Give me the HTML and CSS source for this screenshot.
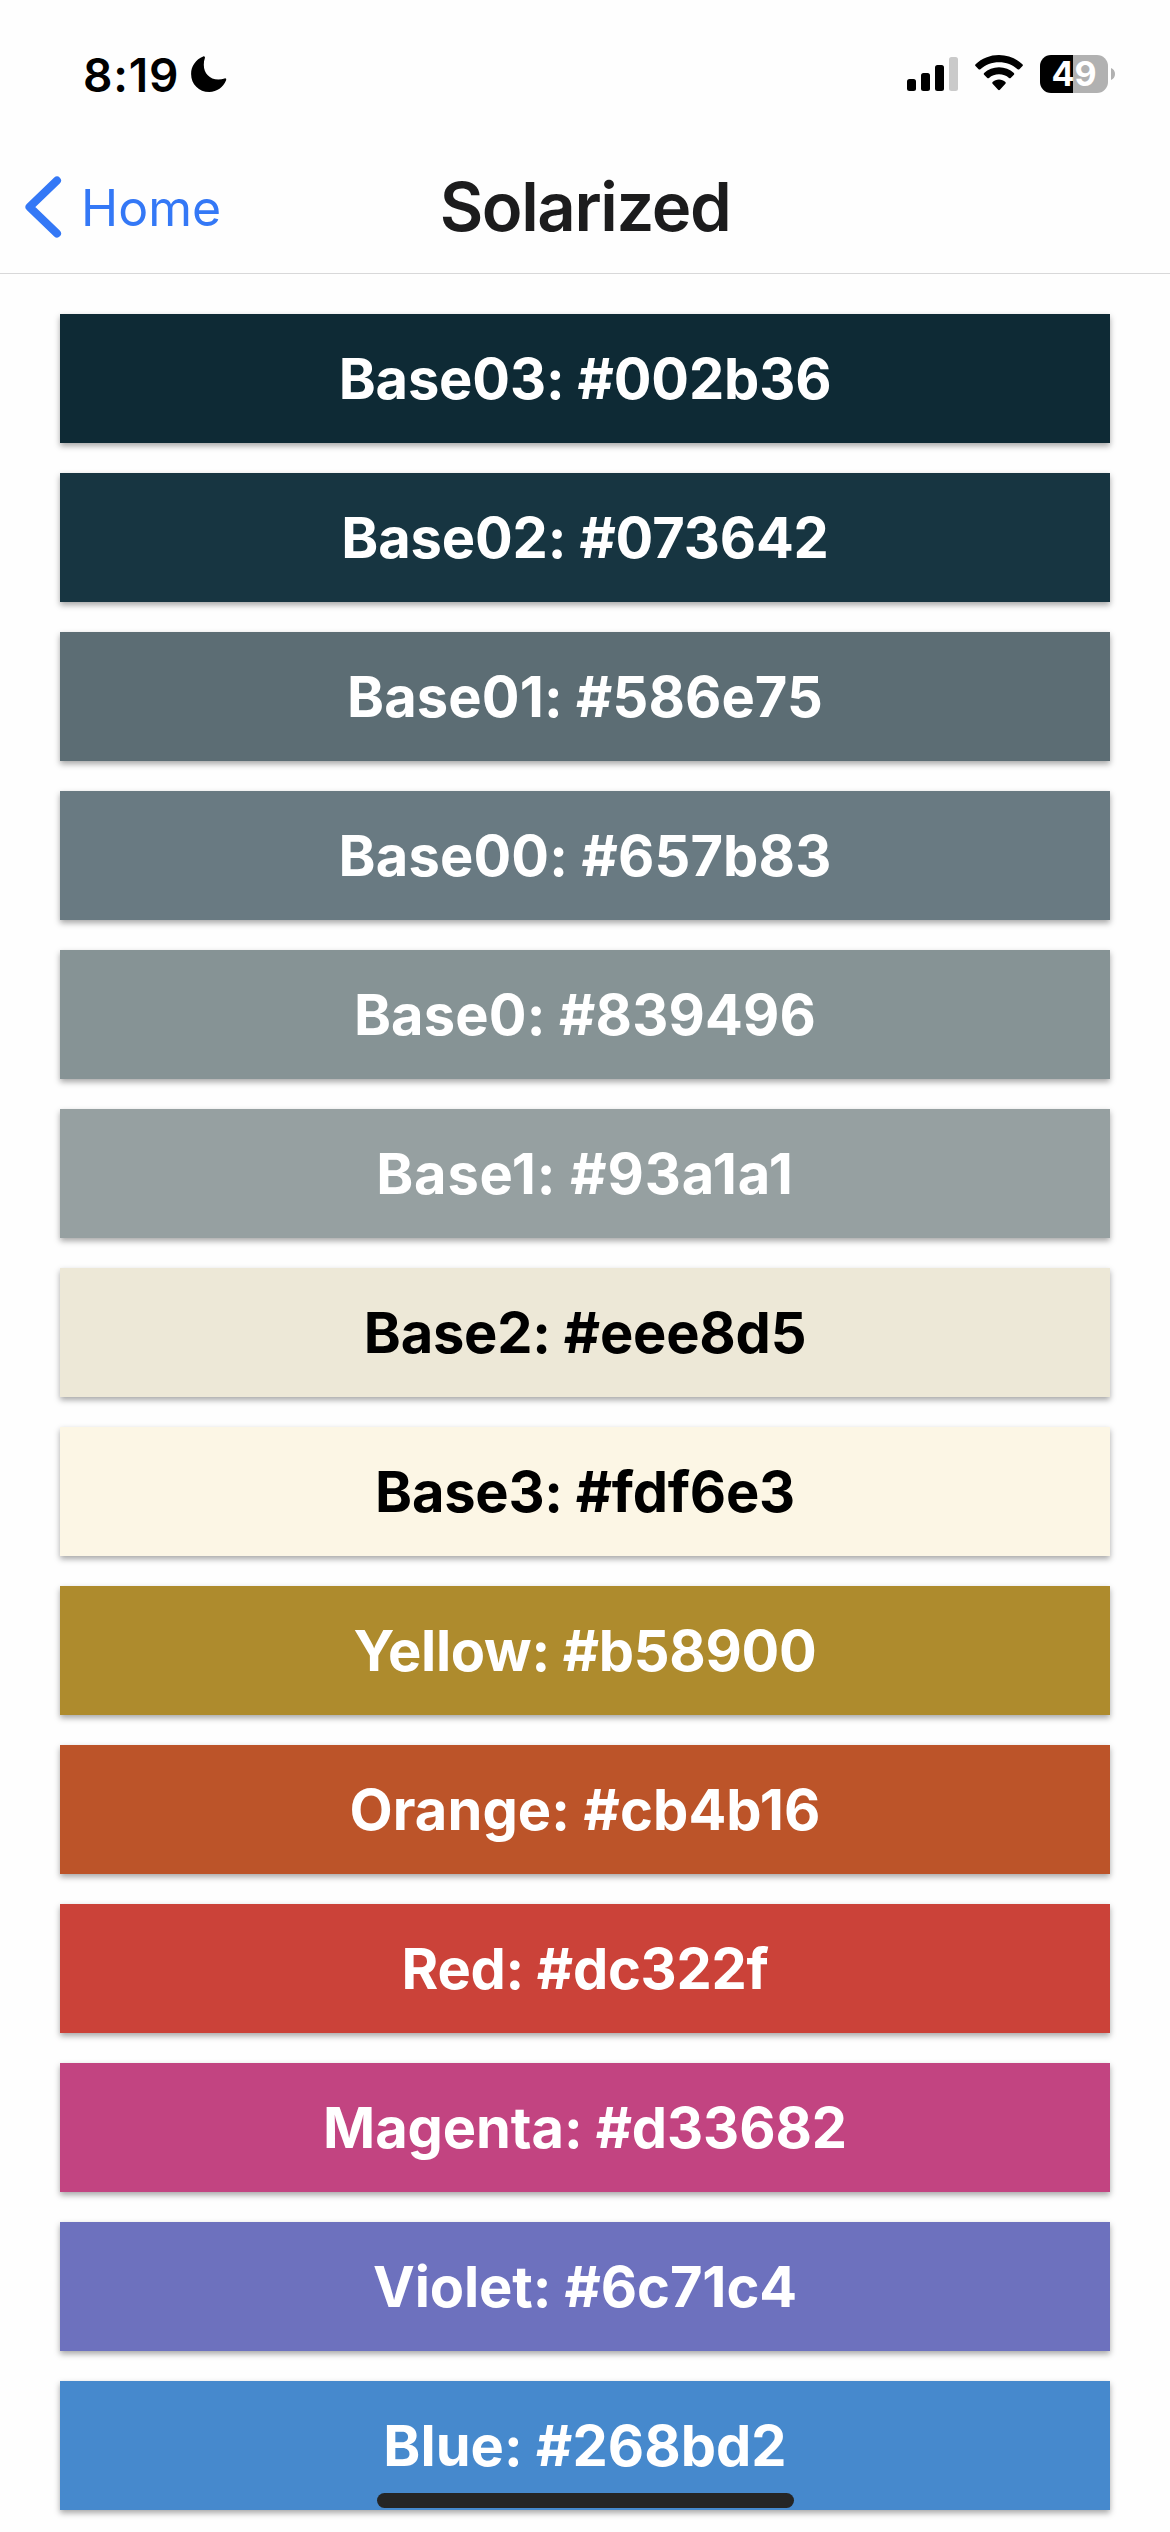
FILE: index.html
```
<!DOCTYPE html>
<html lang="en">
<head>
<meta charset="utf-8">
<title>Solarized</title>
<link rel="stylesheet" href="styles.css">
</head>
<body>
<div class="status">
  <div class="status-left">
    <span class="clock">8:19</span>
    <svg class="moon" width="36" height="36" viewBox="0 0 36 36"><path d="M12.2 .4C13.4 0 14.3.9 13.9 2.1C13.1 4.2 12.8 6.500 12.800 8.700C12.800 17.400 18.600 23.400 27.300 23.400C29.500 23.400 31.600 22.900 33.600 22.400C34.900 22 35.600 22.900 35.100 24.200C32.300 31.300 25.900 35.900 18.300 35.900C7.900 35.900.1 28.200.1 17.900C.1 10 4.900 3.300 12.200.4Z"/></svg>
  </div>
  <div class="status-right">
    <svg class="signal" width="52" height="36" viewBox="0 0 52 36"><rect y="23" width="9" height="12" rx="2.500"/><rect x="14" y="17" width="9" height="18" rx="2.500"/><rect x="28" y="9" width="9" height="26" rx="2.500"/><rect class="dim" x="42" y="1" width="9" height="34" rx="2.500"/></svg>
    <svg class="wifi" width="48" height="36" viewBox="0 0 48 36"><path d="M24 0C33 0 41.200 3.400 47.400 9.200Q48.300 10.100 47.500 11L44.400 14.200Q43.500 15 42.600 14.200C37.600 9.800 31.200 7.200 24 7.200S10.400 9.800 5.400 14.200Q4.500 15 3.600 14.200L.5 11Q-.3 10.100.6 9.200C6.800 3.400 15 0 24 0Z"/><path d="M24 12.300C29.700 12.300 34.900 14.400 38.900 18Q39.800 18.900 38.900 19.800L35.700 22.900Q34.900 23.700 34 22.900C31.300 20.700 27.800 19.300 24 19.300S16.700 20.700 14 22.900Q13.100 23.700 12.300 22.900L9.100 19.800Q8.200 18.900 9.100 18C13.100 14.400 18.300 12.300 24 12.300Z"/><path d="M24 24.600C26.500 24.600 28.700 25.500 30.400 27Q31.300 27.900 30.400 28.800L24.900 34.800Q24 35.700 23.100 34.800L17.600 28.800Q16.700 27.900 17.600 27C19.300 25.500 21.500 24.600 24 24.600Z"/></svg>
    <div class="battery"><div class="cell">49</div><svg width="4" height="12" viewBox="0 0 4 12"><path d="M0 0C2.500 1 4 3 4 6S2.500 11 0 12Z"/></svg></div>
  </div>
</div>
<header class="nav">
  <a class="back"><svg width="38" height="64" viewBox="0 0 38 64"><path d="M33 5.500L5.500 32L33 58.500" /></svg><span>Home</span></a>
  <h1>Solarized</h1>
  <div></div>
</header>
<main class="list">
  <div class="swatch base03"><span>Base03: #002b36</span></div>
  <div class="swatch base02"><span>Base02: #073642</span></div>
  <div class="swatch base01"><span>Base01: #586e75</span></div>
  <div class="swatch base00"><span>Base00: #657b83</span></div>
  <div class="swatch base0"><span>Base0: #839496</span></div>
  <div class="swatch base1"><span>Base1: #93a1a1</span></div>
  <div class="swatch base2"><span>Base2: #eee8d5</span></div>
  <div class="swatch base3"><span>Base3: #fdf6e3</span></div>
  <div class="swatch yellow"><span>Yellow: #b58900</span></div>
  <div class="swatch orange"><span>Orange: #cb4b16</span></div>
  <div class="swatch red"><span>Red: #dc322f</span></div>
  <div class="swatch magenta"><span>Magenta: #d33682</span></div>
  <div class="swatch violet"><span>Violet: #6c71c4</span></div>
  <div class="swatch blue"><span>Blue: #268bd2</span></div>
</main>
<div class="home-indicator"></div>
</body>
</html>
```
FILE: styles.css
```
* { box-sizing: border-box; }
body {
  margin: 0;
  height: 2532px;
  overflow: hidden;
  background: #fefefe;
  font-family: Inter, "Liberation Sans", sans-serif;
  color: #000;
}
svg { display: block; }
.status {
  height: 141px;
  padding: 0 55px 0 83px;
  display: flex;
  justify-content: space-between;
}
.status-left { display: flex; }
.clock {
  margin-top: 47px;
  width: 108px;
  font-size: 46px;
  line-height: 56px;
  font-weight: 600;
  letter-spacing: 0.8px;
}
.moon { margin-top: 56px; }
.status-right { display: flex; padding-top: 55px; }
.signal { margin: 1px 16px 0 0; }
.signal .dim { fill: #cacaca; }
.wifi { margin-right: 17px; }
.battery { display: flex; align-items: center; gap: 3px; height: 38px; }
.battery svg { fill: #b1b1b1; }
.cell {
  width: 68px;
  height: 38px;
  border-radius: 11px;
  background: linear-gradient(90deg, #000 33px, #b1b1b1 33px);
  color: #fff;
  font-size: 34px;
  line-height: 38px;
  font-weight: 700;
  text-align: center;
}
.nav {
  height: 133px;
  border-bottom: 1px solid #d8d8d9;
  display: grid;
  grid-template-columns: 1fr auto 1fr;
}
.back { display: flex; color: #3478f6; padding-left: 24px; }
.back svg {
  margin-top: 34px;
  fill: none;
  stroke: #3478f6;
  stroke-width: 8;
  stroke-linecap: round;
  stroke-linejoin: round;
}
.back span { margin: 37px 0 0 19px; font-size: 50px; line-height: 60px; }
.nav h1 {
  margin: 26px 0 0;
  font-size: 67px;
  line-height: 80px;
  font-weight: 600;
  letter-spacing: -1.4px;
  color: #1c1c1d;
}
.list {
  padding: 40px 60px 0;
  display: flex;
  flex-direction: column;
  gap: 30px;
}
.swatch {
  height: 129px;
  flex: none;
  display: flex;
  align-items: center;
  justify-content: center;
  box-shadow: 0 3px 6px rgba(0, 0, 0, 0.35);
  color: #fff;
  font-size: 56px;
  line-height: 68px;
  font-weight: 700;
}
.base03 { background: #0e2a35; letter-spacing: -0.16px; }
.base02 { background: #173541; letter-spacing: -0.14px; }
.base01 { background: #5c6d74; letter-spacing: 0.1px; }
.base00 { background: #697a82; letter-spacing: 0.14px; }
.base0 { background: #869395; letter-spacing: 0.16px; }
.base1 { background: #96a0a1; letter-spacing: 0.8px; }
.base2 { background: #ede8d7; color: #000; letter-spacing: -0.22px; }
.base3 { background: #fcf6e5; color: #000; letter-spacing: -0.25px; }
.yellow { background: #ae8b2d; letter-spacing: -0.3px; }
.orange { background: #bc5429; letter-spacing: 0.1px; }
.red { background: #cb4239; letter-spacing: -0.29px; }
.magenta { background: #c24481; letter-spacing: -0.11px; }
.violet { background: #6d71be; letter-spacing: -0.1px; }
.blue { background: #4689cd; letter-spacing: 0.05px; }
.home-indicator {
  position: absolute;
  left: 377px;
  top: 2493px;
  width: 417px;
  height: 15px;
  border-radius: 8px;
  background: #252525;
}
```
